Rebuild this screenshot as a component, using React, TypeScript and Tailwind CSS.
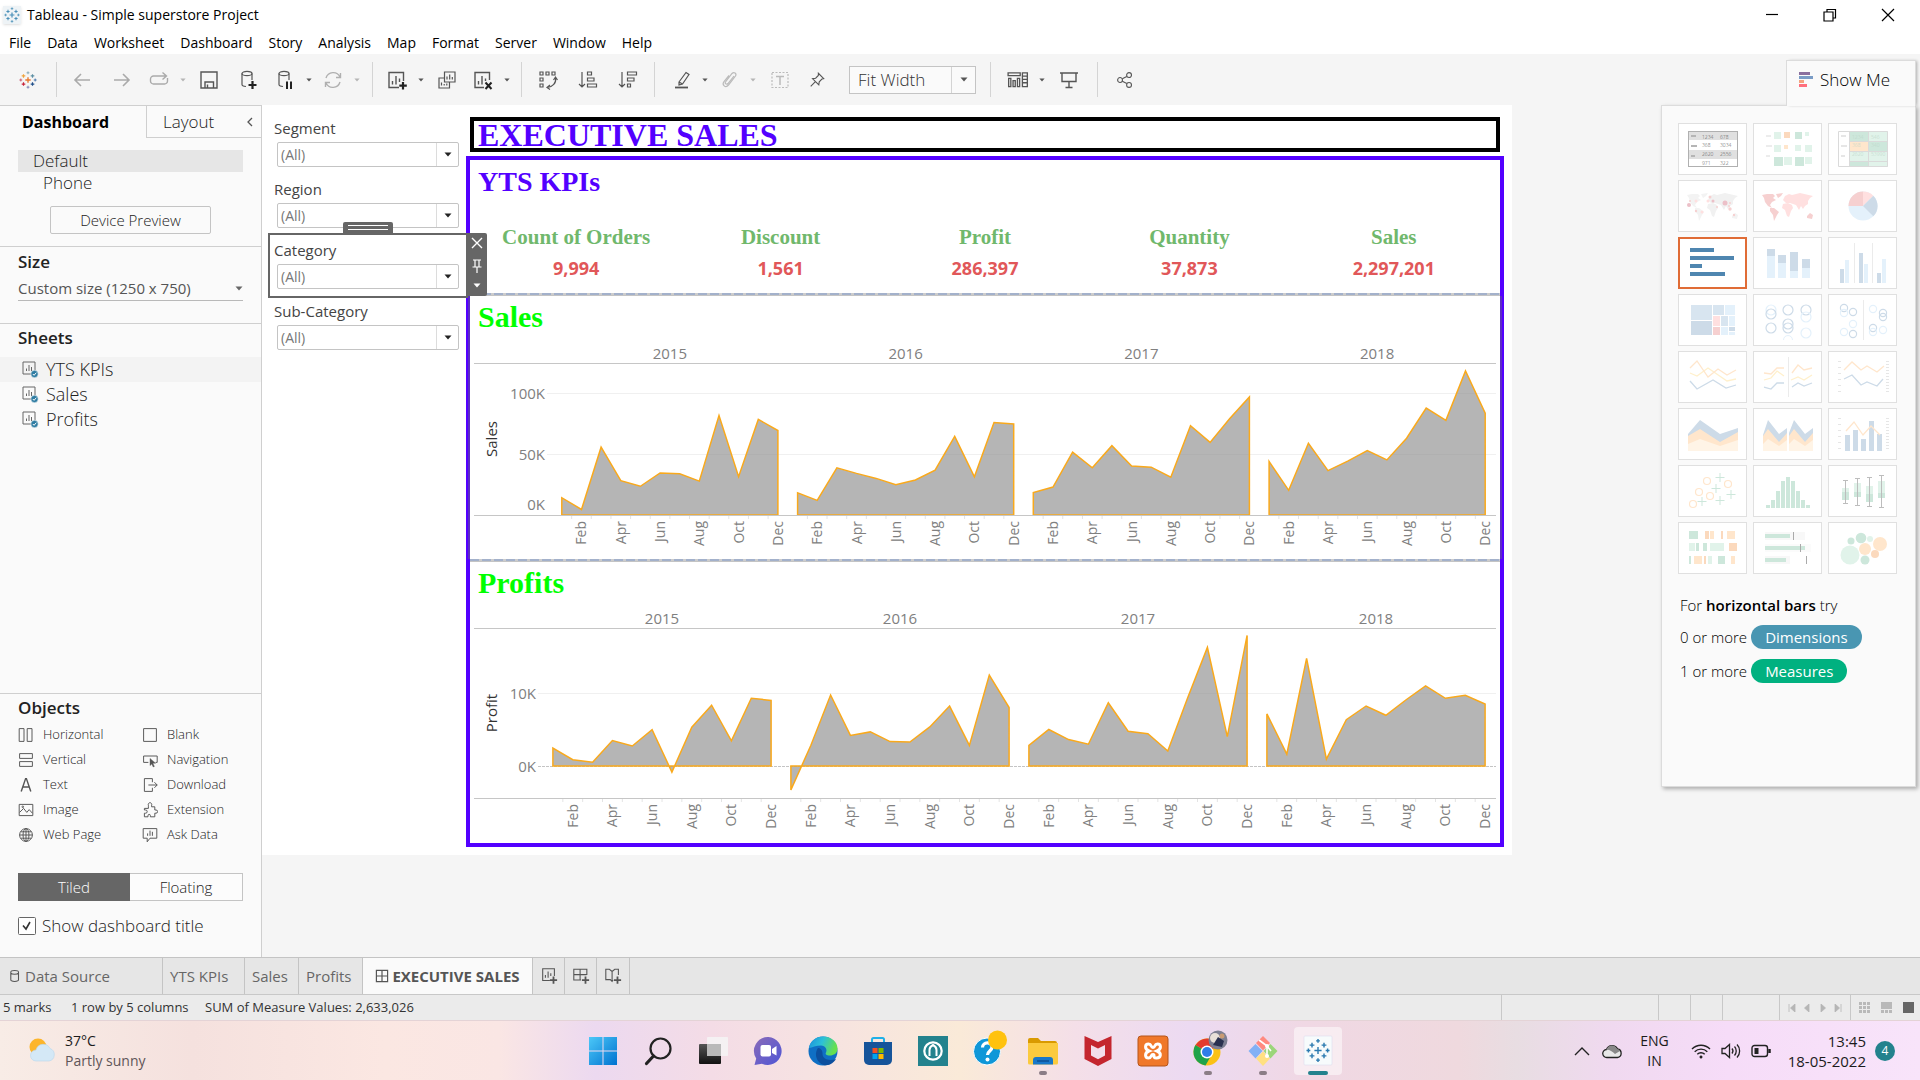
import React from "react";

type Kids = { children?: React.ReactNode };

/* ---------- data ---------- */

const menus = ["File", "Data", "Worksheet", "Dashboard", "Story", "Analysis", "Map", "Format", "Server", "Window", "Help"];

const years = ["2015", "2016", "2017", "2018"];
const months = ["Jan", "Feb", "Mar", "Apr", "May", "Jun", "Jul", "Aug", "Sep", "Oct", "Nov", "Dec"];

const sales = [
  [14.2, 4.5, 55.7, 28.3, 23.6, 34.6, 33.9, 27.9, 81.8, 31.5, 78.6, 69.5],
  [18.2, 12.0, 38.7, 34.2, 30.1, 24.8, 28.8, 36.9, 64.6, 31.4, 76.0, 74.9],
  [18.5, 23.0, 51.7, 38.8, 57.0, 40.3, 39.3, 31.1, 73.4, 59.7, 79.4, 97.0],
  [44.0, 20.3, 58.9, 36.5, 44.3, 53.0, 45.3, 63.1, 87.9, 77.8, 118.4, 83.8],
];

const profits = [
  [2.45, 0.86, 0.5, 3.49, 2.74, 4.98, -0.84, 5.32, 8.33, 3.45, 9.29, 8.98],
  [-3.28, 2.81, 9.73, 4.19, 4.67, 3.34, 3.29, 5.36, 8.21, 2.82, 12.47, 8.02],
  [2.82, 5.0, 3.61, 2.98, 8.66, 4.75, 4.43, 2.06, 9.33, 16.24, 4.01, 17.89],
  [7.14, 1.61, 14.75, 0.93, 6.34, 8.22, 6.95, 9.04, 10.99, 9.28, 9.69, 8.48],
];

const kpis = [
  ["Count of Orders", "9,994"],
  ["Discount", "1,561"],
  ["Profit", "286,397"],
  ["Quantity", "37,873"],
  ["Sales", "2,297,201"],
];

/* ---------- small helpers ---------- */

function Arrow({ className = "text-[#444]" }: { className?: string }) {
  return (
    <svg width="8" height="5" viewBox="0 0 8 5" className={className} aria-hidden="true">
      <path d="M0.5 0.5h7L4 4.5z" fill="currentColor" />
    </svg>
  );
}

function Ico({ s = 20, children, className = "text-[#555]" }: Kids & { s?: number; className?: string }) {
  return (
    <svg width={s} height={s} viewBox="0 0 20 20" fill="none" stroke="currentColor" strokeWidth="1.2" className={className} aria-hidden="true">
      {children}
    </svg>
  );
}

function Cross({ x, y, r, c, w = 1.3 }: { x: number; y: number; r: number; c: string; w?: number }) {
  return <path d={`M${x - r} ${y}h${2 * r}M${x} ${y - r}v${2 * r}`} stroke={c} strokeWidth={w} fill="none" />;
}

function TableauMark({ size, mono }: { size: number; mono?: string }) {
  const c = (k: string) => mono ?? k;
  return (
    <svg width={size} height={size} viewBox="0 0 20 20" aria-hidden="true">
      <Cross x={10} y={10} r={3} c={c("#e8762c")} w={1.5} />
      <Cross x={5} y={5.5} r={2} c={c("#f0a33c")} />
      <Cross x={15} y={5.5} r={2} c={c("#5c8fa3")} />
      <Cross x={5} y={14.5} r={2} c={c("#c8243c")} />
      <Cross x={15} y={14.5} r={2} c={c("#1f4e89")} />
      <Cross x={10} y={2} r={1.6} c={c("#7fa6b5")} w={1} />
      <Cross x={10} y={18} r={1.6} c={c("#7a7fb0")} w={1} />
      <Cross x={2} y={10} r={1.6} c={c("#c9556b")} w={1} />
      <Cross x={18} y={10} r={1.6} c={c("#3f6fa8")} w={1} />
    </svg>
  );
}

/* ---------- toolbar ---------- */

function Tool({ label, w = "w-[38px]", children }: Kids & { label: string; w?: string }) {
  return (
    <button aria-label={label} className={`flex h-9 shrink-0 items-center justify-center ${w}`}>
      {children}
    </button>
  );
}

const Drop = ({ dim }: { dim?: boolean }) => (
  <Tool label="More" w="w-[14px]">
    <Arrow className={dim ? "h-1 w-1.5 text-[#b5b5b5]" : "h-1 w-1.5 text-[#555]"} />
  </Tool>
);

const Sep = () => <div className="h-[35px] w-px shrink-0 bg-[#d4d4d4]" />;

function Toolbar() {
  return (
    <div className="flex h-[51px] items-center bg-[#f5f5f5]">
      <Tool label="Start page" w="w-[56px]"><TableauMark size={18} /></Tool>
      <Sep />
      <div className="flex items-center pr-2 pl-[5px]">
        <Tool label="Undo" w="w-10"><Ico className="text-[#aaa]"><path d="M18 10H3M9 4l-6 6 6 6" strokeWidth="1.6" /></Ico></Tool>
        <Tool label="Redo" w="w-10"><Ico className="text-[#aaa]"><path d="M2 10h15M11 4l6 6-6 6" strokeWidth="1.6" /></Ico></Tool>
        <Tool label="Replay" w="w-[34px]"><Ico className="text-[#aaa]"><path d="M8 14H4.500a3 3 0 0 1-3-3V9a3 3 0 0 1 3-3H17M13.500 2.500L17.500 6l-4 3.500M18.500 8v3a3 3 0 0 1-3 3H8" strokeWidth="1.4" /></Ico></Tool>
        <Drop dim />
        <Tool label="Save"><Ico><path d="M2 2h16v16H2zM6 18v-6h8.500v6M8.500 14.500V18" strokeWidth="1.4" /></Ico></Tool>
        <Tool label="New data source" w="w-10"><Ico><ellipse cx="9" cy="3.500" rx="5" ry="2.200" /><path d="M4 3.500v11c0 1 1.500 1.800 4 2M14 3.500V10" /><path d="M14.500 11v8M10.500 15h8" strokeWidth="2.200" stroke="#222" /></Ico></Tool>
        <Tool label="Pause updates" w="w-[34px]"><Ico><ellipse cx="9" cy="3.500" rx="5" ry="2.200" /><path d="M4 3.500v11c0 1 1.500 1.800 4 2M14 3.500V10" /><path d="M12 11.500v7.500M16 11.500v7.500" strokeWidth="2" stroke="#222" /></Ico></Tool>
        <Drop />
        <Tool label="Refresh" w="w-[34px]"><Ico className="text-[#b0b0b0]"><path d="M3 8a7.500 7.500 0 0 1 14-1M17 12a7.500 7.500 0 0 1-14 1M17.500 3v4.500H13M2.500 17v-4.500H7" strokeWidth="1.400" /></Ico></Tool>
        <Drop dim />
      </div>
      <Sep />
      <div className="flex items-center px-[7px]">
        <Tool label="New worksheet" w="w-[34px]"><Ico><path d="M12 17.500H2v-15h14.500V11M5.500 14.500V11M9 14.500V6M12.500 12V8.500" strokeWidth="1.400" /><path d="M16 12v7.500M12.300 15.700h7.500" strokeWidth="2.200" stroke="#222" /></Ico></Tool>
        <Drop />
        <Tool label="Duplicate"><Ico><path d="M7.500 2h10.500v10H7.500zM10 9.500v-3M12.700 9.500V4.500M15.300 9.500V7M7.500 8H2v10h10.500v-6M4.500 15.500v-3M7.200 15.500v-1.500M9.800 15.500v-2" /></Ico></Tool>
        <Tool label="Clear sheet" w="w-[34px]"><Ico><path d="M11 17.500H2v-15h14.500V10M5.500 14.500V11M9 14.500V6M12.500 11V8.500" strokeWidth="1.400" /><path d="M12.500 12.500l6 6.500M18.500 12.500l-6 6.500" strokeWidth="2" stroke="#222" /></Ico></Tool>
        <Drop />
      </div>
      <Sep />
      <div className="flex items-center px-[6px]">
        <Tool label="Swap rows and columns" w="w-10"><Ico><path d="M2 2h3v3H2zM8 2h3v3H8zM14 2h3v3h-3zM2 8h3v3H2zM2 14h3v3H2zM17.500 8c1 5-3 9-8 9.500M15.500 10l2-3 2 3M12 15l-3 2.500 3 2" /></Ico></Tool>
        <Tool label="Sort ascending" w="w-10"><Ico><path d="M4 2v15M1 14l3 3 3-3M9.500 2h4v3h-4zM9.500 8h6.500v3H9.500zM9.500 14h9v3h-9z" /></Ico></Tool>
        <Tool label="Sort descending" w="w-10"><Ico><path d="M4 2v15M1 14l3 3 3-3M9.500 2h9v3h-9zM9.500 8h6.500v3H9.500zM9.500 14h3v3h-3z" /></Ico></Tool>
      </div>
      <Sep />
      <div className="flex items-center pr-[14px] pl-[9px]">
        <Tool label="Highlight" w="w-[34px]"><Ico><path d="M8 12L15 2.500l3 2L11.500 14 8 15zM8 12l3.500 2" /><path d="M4 17.500h13" strokeWidth="1.800" /></Ico></Tool>
        <Drop />
        <Tool label="Group" w="w-[34px]"><Ico className="text-[#bbb]"><path d="M15 6l-6 7.500c-1.500 1.500-3.500 0-2.500-1.500L13 3.500c2-2.200 5 0 3.500 2.500L9.500 15c-3 3.500-7 0-4.500-3.500L10 5.500" /></Ico></Tool>
        <Drop dim />
        <Tool label="Show mark labels"><Ico className="text-[#bbb]"><path d="M3 2.500h16v15H3z" strokeDasharray="2 1.500" /><path d="M7 6.500h8M11 6.500V15" strokeWidth="1.500" /></Ico></Tool>
        <Tool label="Fix axes"><Ico s={18}><path d="M11.500 2.500l6 6-2 .5-3 3-.5 3.500-7-7L8.500 8l3-3zM8.500 11.500L3 17" /></Ico></Tool>
        <div className="ml-[13px] flex h-7 w-[127px] items-center border border-[#c4c4c4] bg-[#fafafa] pr-[7px]">
          <select aria-label="Fit" className="h-full w-full min-w-0 appearance-none bg-transparent pl-2 text-[17px] leading-6 text-[#333]">
            <option>Fit Width</option>
          </select>
          <div className="mr-2 h-[26px] w-px shrink-0 bg-[#d4d4d4]" />
          <Arrow className="shrink-0 text-[#555]" />
        </div>
      </div>
      <Sep />
      <div className="flex items-center pr-2 pl-[10px]">
        <Tool label="Show/hide cards" w="w-[34px]"><Ico s={22}><path d="M1 3.500h11v2.500H1zM1.500 8.500h2v7.500h-2zM5.500 10.500h2v5.500h-2zM9.500 8.500h2v7.500h-2zM14 3.500h4.500v12.500H14zM14 6.500h4.500M14 9.500h4.500M14 12.500h4.500" /></Ico></Tool>
        <Drop />
        <Tool label="Presentation mode" w="w-10"><Ico><path d="M1 3h18M3 3v8.500h14V3M10 11.500V17M6.500 17.500h7" strokeWidth="1.400" /></Ico></Tool>
      </div>
      <Sep />
      <div className="flex items-center px-2">
        <Tool label="Share"><Ico s={18}><circle cx="4.500" cy="10" r="2.700" /><circle cx="14.500" cy="4.500" r="2.700" /><circle cx="14.500" cy="15.500" r="2.700" /><path d="M7 8.700L12 6M7 11.300L12 14" /></Ico></Tool>
      </div>
    </div>
  );
}

/* ---------- left panel ---------- */

function SheetIcon() {
  return (
    <svg width="17" height="17" viewBox="0 0 17 17" fill="none" aria-hidden="true">
      <path d="M1 1h12v12H1z" stroke="#666" />
      <path d="M4.500 10V7.500M7 10V4M9.500 10V6" stroke="#666" />
      <circle cx="12.500" cy="13" r="3.700" fill="#2f7da3" stroke="#fafafa" strokeWidth=".6" />
      <path d="M10.800 13l1.300 1.300 2.200-2.600" stroke="#fff" />
    </svg>
  );
}

const objectItems: [string, React.ReactNode][] = [
  ["Horizontal", <path d="M1.500 2h6v16h-6zM11.500 2h6v16h-6z" />],
  ["Blank", <path d="M2 2h16v16H2z" />],
  ["Vertical", <path d="M2 2h16v6H2zM2 12h16v6H2z" />],
  ["Navigation", <><path d="M8 13H2V5h17v8h-2" /><path d="M10 8l7 6-3.500.2L15.500 18l-1.500.7-1.700-3.800L10 17z" fill="currentColor" strokeWidth=".5" /></>],
  ["Text", <path d="M4 18L9.500 2h1L16 18M6 12.500h8" strokeWidth="1.800" />],
  ["Download", <path d="M13 6.500V2H3v16h10v-4.500M8 10h11M15.500 6.500L19 10l-3.500 3.500" />],
  ["Image", <><path d="M1.500 3h17v14h-17zM2 13l5-5 4 5 3-3.500 4 4.500" /><circle cx="6" cy="6" r="1" /></>],
  ["Extension", <path d="M8 6V4a2.200 2.200 0 1 1 4 0v2h4v4h1.500a2 2 0 1 1 0 4H16v4.500h-5.500V17a1.500 1.500 0 0 0-3 0v1.500H3V14h1.500a2 2 0 1 0 0-4H3V8h5z" />],
  ["Web Page", <><circle cx="10" cy="10" r="8" /><ellipse cx="10" cy="10" rx="3.700" ry="8" /><path d="M2 10h16M3.500 6h13M3.500 14h13M10 2v16" /></>],
  ["Ask Data", <path d="M1.500 2h17v12H10l-3.500 4.500V14h-5zM7 11V8M10 11V4.500M13 11V6" />],
];

function LeftPanel() {
  return (
    <aside className="flex w-[262px] shrink-0 flex-col border-t border-r border-[#cfcfcf] bg-[#fafafa] text-[#222]">
      <div className="flex h-8">
        <button className="w-[146px] pr-4 pl-[22px] text-left text-[16px] leading-7 font-bold text-black">Dashboard</button>
        <button className="flex-1 border-b border-l border-[#cfcfcf] pl-4 text-left text-[17px]">Layout</button>
        <button aria-label="Collapse" className="flex w-[15px] items-center border-b border-[#cfcfcf]">
          <svg width="8" height="12" viewBox="0 0 8 12" fill="none" stroke="#555" strokeWidth="1.300"><path d="M6 2L2 6l4 4" /></svg>
        </button>
      </div>

      <div className="px-[18px] pt-3">
        <button className="block h-[22px] w-full bg-[#e6e6e6] pl-[15px] text-left text-[17px] leading-[22px]">Default</button>
        <button className="block h-[22px] w-full pl-[25px] text-left text-[17px] leading-[22px]">Phone</button>
        <div className="pt-3 pr-[32px] pl-8">
          <button className="h-7 w-full rounded-[2px] border border-[#c4c4c4] text-[15px] leading-[26px]">Device Preview</button>
        </div>
      </div>

      <div className="mt-3 border-t border-[#cfcfcf] px-[18px] pt-[3px]">
        <h2 className="text-[17px] leading-6 font-semibold">Size</h2>
        <div className="mt-[2px] flex h-[25px] items-center border-b border-[#b9b9b9]">
          <select aria-label="Size" className="w-full appearance-none bg-transparent text-[15px] font-normal text-[#555]">
            <option>Custom size (1250 x 750)</option>
          </select>
          <Arrow className="shrink-0 text-[#666]" />
        </div>
      </div>

      <div className="mt-[22px] flex-1 border-t border-[#cfcfcf] pt-[2px]">
        <h2 className="px-[18px] text-[17px] leading-6 font-semibold">Sheets</h2>
        <ul className="mt-[7px] text-[18px]">
          {["YTS KPIs", "Sales", "Profits"].map((s, i) => (
            <li key={s} className={`flex h-[25px] items-center gap-[7px] pl-[22px] ${i === 0 ? "bg-[#f3f3f3]" : ""}`}>
              <SheetIcon />
              {s}
            </li>
          ))}
        </ul>
      </div>

      <div className="border-t border-[#cfcfcf] px-[18px] pt-[2px]">
        <h2 className="text-[17px] leading-6 font-semibold">Objects</h2>
        <ul className="mt-[2px] grid grid-cols-[124px_1fr] text-[13px]">
          {objectItems.map(([label, icon]) => (
            <li key={label} className="flex h-[25px] items-center gap-[9px]">
              <Ico s={16} className="text-[#555]">{icon}</Ico>
              {label}
            </li>
          ))}
        </ul>
        <div className="mt-[26px] flex h-7 text-[15px]">
          <button className="flex-1 bg-[#666] text-white">Tiled</button>
          <button className="flex-1 border border-l-0 border-[#c4c4c4] bg-[#fcfcfc]">Floating</button>
        </div>
        <label className="mt-[13px] mb-[19px] flex h-6 items-center gap-[6px] text-[17px]">
          <input type="checkbox" defaultChecked className="peer sr-only" />
          <svg width="18" height="18" viewBox="0 0 18 18" fill="none" aria-hidden="true">
            <rect x=".5" y=".5" width="17" height="17" rx="1" fill="#fff" stroke="#666" />
            <path d="M5 8.500L8 12l4-7" stroke="#333" strokeWidth="1.600" />
          </svg>
          Show dashboard title
        </label>
      </div>
    </aside>
  );
}

/* ---------- dashboard canvas ---------- */

function Filter({ label, selected }: { label: string; selected?: boolean }) {
  return (
    <div className="relative h-[61px] pt-[5px] pr-[7px] pl-[4px]">
      <label htmlFor={`f-${label}`} className="block text-[15px] leading-5 font-normal text-[#444]">{label}</label>
      <div className="mt-1 ml-[3px] flex h-[25px] items-center rounded-[2px] border border-[#c4c4c4] bg-white">
        <select id={`f-${label}`} className="h-full w-full flex-1 appearance-none bg-transparent pl-[3px] text-[14px] leading-5 font-normal text-[#777]">
          <option>(All)</option>
        </select>
        <div className="flex h-full w-[22px] items-center justify-center border-l border-[#dcdcdc]">
          <Arrow className="text-[#222]" />
        </div>
      </div>
      {selected && (
        <>
          <div className="pointer-events-none absolute -top-[2px] -right-[2px] -bottom-[2px] -left-[2px] border-2 border-[#666]" />
          <div className="absolute -top-[13px] left-[73px] flex h-[11px] w-[50px] flex-col items-center justify-center gap-[3px] rounded-t-[2px] bg-[#666]">
            <div className="h-px w-10 bg-white" />
            <div className="h-px w-10 bg-white" />
          </div>
          <div className="absolute -top-[2px] -right-[21px] z-10 flex h-[63px] w-[21px] flex-col items-center justify-between rounded-r-[2px] bg-[#666] pt-1 pb-2">
            <button aria-label="Remove"><svg width="12" height="12" viewBox="0 0 12 12" stroke="#fff" strokeWidth="1.400"><path d="M1 1l10 10M11 1L1 11" /></svg></button>
            <button aria-label="Pin"><svg width="10" height="14" viewBox="0 0 10 14" fill="none" stroke="#fff" strokeWidth="1.200"><path d="M1 1h8M3 1v6.500M7 1v6.500M.5 8h9M5 8v6" /></svg></button>
            <button aria-label="More options"><Arrow className="text-white" /></button>
          </div>
        </>
      )}
    </div>
  );
}

interface ChartProps {
  title: string;
  data: number[][];
  height: number;
  left: number;
  zero: number;
  unit: number;
  axis: number;
  ticks: { v: number; label: string; dy?: number }[];
}

/* Area chart with one pane per year; all coordinates are relative to the header row. */
function AreaChart({ title, data, height, left, zero, unit, axis, ticks }: ChartProps) {
  const W = 1022;
  const pane = (W - 1 - left) / 4;
  const step = pane / 12;
  const mid = (24 + axis) / 2;
  return (
    <svg viewBox={`0 0 ${W} ${height}`} className="block w-full" fontSize="15" role="img" aria-label={title}>
      {years.map((y, i) => (
        <text key={y} x={left + pane * (i + 0.5)} y="20" textAnchor="middle" fill="#808080">{y}</text>
      ))}
      <path d={`M0 24.500H${W}`} stroke="#c6c6c6" />
      {ticks.map((t) => (
        <g key={t.label}>
          {(t.v !== 0 || axis !== zero) && (
            <path
              d={`M${left - 5} ${Math.round(zero - t.v * unit) + 0.5}H${W}`}
              stroke={t.v === 0 ? "#c4c4c4" : "#f0f0f0"}
              strokeDasharray={t.v === 0 ? "3 1" : undefined}
            />
          )}
          <text x={left - 7} y={zero - t.v * unit + 6 + (t.dy ?? 0)} textAnchor="end" fill="#808080">{t.label}</text>
        </g>
      ))}
      {data.map((row, i) => {
        const x = (m: number) => left + pane * i + step * (m + 0.5);
        const line = row.map((v, m) => `${x(m).toFixed(1)} ${(zero - v * unit).toFixed(1)}`).join("L");
        return (
          <path
            key={i}
            d={`M${x(0).toFixed(1)} ${zero}L${line}L${x(11).toFixed(1)} ${zero}Z`}
            fill="#8c8c8c"
            fillOpacity=".64"
            stroke="#f9a91c"
            strokeWidth="1.500"
          />
        );
      })}
      <path d={`M0 ${axis + 0.5}H${W}`} stroke="#c6c6c6" />
      {data.map((_, i) =>
        months.map((m, k) => {
          const cx = left + pane * i + step * (k + 0.5);
          return (
            <g key={`${i}${m}`}>
              {k < 11 && <path d={`M${cx + step / 2} ${axis + 1}v3`} stroke="#e4e4e4" />}
              {k % 2 === 1 && (
                <text transform={`translate(${cx + 5} ${axis + 6}) rotate(-90)`} textAnchor="end" fontSize="14" fill="#808080">{m}</text>
              )}
            </g>
          );
        })
      )}
      <text transform={`translate(23 ${mid}) rotate(-90)`} textAnchor="middle" fill="#333">{title}</text>
    </svg>
  );
}

const Divider = () => (
  <div className="h-[3px] border-b border-[#c4c4c4] bg-[repeating-linear-gradient(90deg,#a3b1cb_0_9px,#cccccc_9px_12px)]" />
);

function Dashboard() {
  return (
    <div className="flex h-[750px] w-[1250px] shrink-0 bg-white">
      <div className="w-[204px] shrink-0 pt-2 pl-2">
        <Filter label="Segment" />
        <Filter label="Region" />
        <Filter label="Category" selected />
        <Filter label="Sub-Category" />
      </div>
      <div className="flex min-w-0 flex-1 flex-col pt-3 pr-2 pb-2 font-['Liberation_Serif',serif]">
        <div className="mr-1 ml-1 flex h-[35px] items-center border-4 border-black pl-1">
          <h1 className="text-[32px] leading-[28px] font-bold text-[#5300ff]">EXECUTIVE SALES</h1>
        </div>
        <div className="mt-1 flex flex-1 flex-col border-4 border-[#5300ff]">
          <section className="h-[133px] px-1 pt-1">
            <h2 className="pl-1 text-[28px] leading-9 font-bold text-[#5300ff]">YTS KPIs</h2>
            <dl className="mt-[25px] grid grid-cols-5 text-center">
              {kpis.map(([k, v]) => (
                <div key={k}>
                  <dt className="text-[21px] leading-6 font-bold text-[#70b86c]">{k}</dt>
                  <dd className="mt-[6px] font-['Open_Sans',sans-serif] text-[18px] leading-[26px] font-bold text-[#e15759]">{v}</dd>
                </div>
              ))}
            </dl>
          </section>
          <Divider />
          <section className="-mx-[2px] h-[263px] border-x-2 border-[#5b2cc4] px-1 pt-[3px]">
            <h2 className="pl-1 text-[30px] leading-9 font-bold text-[#00ff00]">Sales</h2>
            <div className="mt-1 font-['Open_Sans',sans-serif] font-normal">
              <AreaChart
                title="Sales"
                data={sales}
                height={210}
                left={78}
                zero={176}
                unit={1.2165}
                axis={176}
                ticks={[{ v: 100, label: "100K" }, { v: 50, label: "50K" }, { v: 0, label: "0K", dy: -11 }]}
              />
            </div>
          </section>
          <Divider />
          <section className="flex-1 px-1 pt-[3px]">
            <h2 className="pl-1 text-[30px] leading-9 font-bold text-[#00ff00]">Profits</h2>
            <div className="mt-[3px] font-['Open_Sans',sans-serif] font-normal">
              <AreaChart
                title="Profit"
                data={profits}
                height={235}
                left={69}
                zero={162}
                unit={7.3}
                axis={194}
                ticks={[{ v: 10, label: "10K" }, { v: 0, label: "0K" }]}
              />
            </div>
          </section>
        </div>
      </div>
    </div>
  );
}

/* ---------- Show Me ---------- */

const B1 = "#cddbe8", B2 = "#e4f1fb", G1 = "#cde7db", G2 = "#e1f3ea", O1 = "#ffe6cc", O2 = "#fbd9bd", R1 = "#f6d0d0", R2 = "#ffe0e0", Y1 = "#fff0cc";

type Box = [number, number, number, number, string];
const Boxes = ({ b }: { b: Box[] }) => (
  <>{b.map(([x, y, x2, y2, c], i) => <rect key={i} x={x} y={y} width={x2 - x} height={y2 - y} fill={c} />)}</>
);
const Lines = ({ l, w = 1.3 }: { l: [string, string][]; w?: number }) => (
  <>{l.map(([p, c], i) => <polyline key={i} points={p} fill="none" stroke={c} strokeWidth={w} />)}</>
);
const Polys = ({ p }: { p: [string, string][] }) => <>{p.map(([d, c], i) => <polygon key={i} points={d} fill={c} />)}</>;
const Dots = ({ d, fill }: { d: [number, number, number, string][]; fill?: boolean }) => (
  <>{d.map(([x, y, r, c], i) => <circle key={i} cx={x} cy={y} r={r} fill={fill ? c : "none"} stroke={fill ? "none" : c} strokeWidth="1.200" />)}</>
);
const Ticks = () => <path d="M10 10.500h3M10 16.500h3M10 22.500h3M10 28.500h3M10 34.500h3M10 40.500h3M58 10.500h3M58 13.500h3M58 16.500h3M58 19.500h3M58 22.500h3M58 25.500h3M58 28.500h3M58 31.500h3M58 34.500h3M58 37.500h3M58 40.500h3" stroke="#e6e6e6" />;
const Nums = ({ rows, x, c }: { rows: [string, string][]; x: [number, number]; c: string }) => (
  <>
    {rows.map(([a, b], i) => (
      <g key={i} fontSize="5" fill={c}>
        <text x={x[0]} y={15.500 + i * 8.800}>{a}</text>
        <text x={x[1]} y={15.500 + i * 8.800}>{b}</text>
      </g>
    ))}
  </>
);
const World = ({ a, b }: { a: string; b: string }) => (
  <>
    <path fill={a} d="M9 15l5-1 6 0 2 2-2 2 3 2-4 2-2 3 2 3-4-2-3-4-1-4zM23 14l7-1-2 3-3 2zM17 28l4 0 5 4-2 3-3 6-1-6-3-4zM54 36l3-3 3 2-1 4-5-1z" />
    <path fill={b} d="M30 20l2-4 4-2 3 1 8-2 13 3-3 2-2 3 0 3-3 2-2 3-2-3-2 4-3-5-3-1-3-1-4 0zM30 24l5-1 4 2 1 3-2 3-2 6-2-1-2-6-3-2z" />
  </>
);

const thumbs: [string, React.ReactNode][] = [
  ["Text table", <><Boxes b={[[10, 8, 60, 17, "#e0e0e0"], [10, 27, 60, 36, "#e0e0e0"], [13, 12, 18, 14, "#b5b5b5"], [13, 22, 19, 24, "#b5b5b5"], [13, 32, 17, 34, "#b5b5b5"]]} /><rect x="10.500" y="8.500" width="49" height="35" fill="none" stroke="#b0b0b0" /><Nums rows={[["1234", "678"], ["368", "3034"], ["2620", "2556"], ["971", "322"]]} x={[24, 42]} c="#555" /></>],
  ["Heat map", <Boxes b={[[13, 12, 18, 14, "#ececec"], [13, 22, 19, 24, "#ececec"], [13, 32, 17, 34, "#ececec"], [21, 9, 28, 16, G2], [31, 9, 37, 15, O2], [42, 9, 49, 16, G1], [52, 9, 56, 13, G2], [21, 22, 28, 29, G2], [31, 22, 35, 26, O1], [42, 22, 48, 28, G2], [52, 22, 59, 29, G2], [21, 34, 30, 43, G1], [31, 34, 39, 42, G2], [42, 34, 51, 43, G1], [52, 34, 59, 41, G2]]} />],
  ["Highlight table", <><Boxes b={[[13, 12, 18, 14, "#e6e6e6"], [13, 22, 19, 24, "#e6e6e6"], [13, 32, 17, 34, "#e6e6e6"], [21, 8, 40, 18, G1], [40, 8, 60, 18, G2], [21, 18, 40, 28, O1], [40, 18, 60, 28, G1], [21, 28, 60, 38, G2], [21, 38, 40, 44, G1], [40, 38, 60, 44, G2]]} /><path d="M10.500 8.500h49v35h-49zM21.500 8v36M40.500 8v36M21 18.500h39M21 28.500h39M21 38.500h39" fill="none" stroke="#dadada" /><Nums rows={[["1234", "546"], ["368", "340"], ["2620", "53990"]]} x={[24, 43]} c="#bcd6c9" /></>],
  ["Symbol map", <><World a="#f3f3f3" b="#f1f1f1" /><Dots fill d={[[11, 25, 2, "#ecc0c8"], [12, 21, 1, R1], [18, 21, 1.500, R2], [30, 21, 1.500, R2], [32, 17, 1.500, R1], [35, 21, 1.500, "#ecc0c8"], [47, 23, 2.500, "#ecc0c8"], [52, 23, 1, R1], [39, 27, 1, R1], [52, 29, 1.700, R1], [51, 26, 1, R1], [18, 31, 1.200, R1], [24, 32, 1.500, R2], [56, 35, 1.200, R1]]} /></>],
  ["Map", <World a={R1} b={R2} />],
  ["Pie chart", <><circle cx="35" cy="26" r="14.500" fill={B2} /><path d="M35 26L20.500 26A14.500 14.500 0 0 1 35 11.500z" fill={R1} /><path d="M35 26V11.500A14.500 14.500 0 0 1 45.300 15.700z" fill={R2} /><path d="M35 26L45.300 15.700A14.500 14.500 0 0 1 45.300 36.300z" fill={B1} /></>],
  ["Horizontal bars", <Boxes b={[[12, 11, 36, 15, "#4f86b0"], [12, 19, 56, 23, "#4f86b0"], [12, 27, 24, 31, "#4f86b0"], [12, 35, 47, 39, "#4f86b0"]]} />],
  ["Stacked bars", <Boxes b={[[14, 12, 22, 19, B1], [14, 19, 22, 41, B2], [25, 18, 33, 26, B1], [25, 26, 33, 41, B2], [37, 15, 45, 34, B1], [37, 34, 45, 41, B2], [49, 22, 57, 31, B1], [49, 31, 57, 41, B2]]} />],
  ["Side-by-side bars", <><Boxes b={[[12, 32, 16, 46, B1], [17, 23, 21, 46, B2], [31, 16, 35, 46, B1], [36, 27, 40, 46, B2], [49, 36, 53, 46, B1], [54, 22, 58, 46, B2]]} /><path d="M26.500 6v40M44.500 6v40" stroke="#ebebeb" /></>],
  ["Treemap", <Boxes b={[[13, 11, 34, 26, "#d8e5f0"], [13, 27, 34, 41, B1], [35, 11, 46, 21, "#d8e5f0"], [47, 11, 57, 21, B2], [35, 22, 42, 32, R2], [43, 22, 50, 32, "#d8e5f0"], [51, 22, 57, 32, B2], [35, 33, 42, 41, R1], [43, 33, 50, 41, B2], [51, 33, 57, 37, B1], [51, 38, 57, 41, B2]]} />],
  ["Circle views", <><Dots d={[[18, 16, 5, B2], [18, 20, 5, B1], [18, 34, 5, B1], [35, 16, 5, B1], [35, 30, 5, B1], [35, 34, 5, B1], [53, 16, 5, B1], [53, 23, 5, B2], [53, 39, 5, B2]]} /><path d="M30.500 46a4.500 4.500 0 0 1 9 0" fill="none" stroke={B2} /></>],
  ["Side-by-side circles", <><Dots d={[[16, 14, 3.600, B1], [16, 19, 3.600, B2], [25, 18, 3.600, B1], [25, 30, 3.600, B2], [16, 38, 3.600, B2], [25, 40, 3.600, B1], [45, 15, 3.600, B2], [55, 19, 3.600, B1], [55, 23, 3.600, B1], [45, 34, 3.600, B1], [45, 38, 3.600, B2], [55, 36, 3.600, B2]]} /><path d="M35.500 6v40" stroke="#ebebeb" /></>],
  ["Lines (continuous)", <Lines l={[["12,22 19,25 30,17 49,30 58,28", Y1], ["12,17 19,10 30,26 40,18 49,24 58,19", O1], ["12,30 19,38 35,29 48,37 58,34", B1]]} />],
  ["Lines (discrete)", <><Lines l={[["11,29 18,27 24,20 31,25", Y1], ["38,29 45,26 51,29 59,24", Y1], ["11,22 18,23 24,17 31,17", O1], ["39,22 45,14 51,19 59,17", O1], ["11,36 18,38 24,32 31,32", B1], ["39,36 45,32 51,35 59,32", B1]]} /><path d="M35.500 6v40" stroke="#ebebeb" /></>],
  ["Dual lines", <><Lines l={[["16,19 24,11 33,19 39,15 49,21 56,15", O1], ["16,28 24,24 33,34 39,31 49,35 55,28", B1]]} /><Ticks /></>],
  ["Area (continuous)", <Polys p={[["10,26 22,12 42,26 60,20 60,43 10,43", B1], ["10,28 22,21 42,34 60,24 60,43 10,43", O1], ["10,36 22,31 42,38 60,32 60,43 10,43", "#fff4e6"]]} />],
  ["Area (discrete)", <Polys p={[["10,27 15,12 26,26 34,20 34,43 10,43", B1], ["10,28 15,21 26,34 34,25 34,43 10,43", O1], ["10,36 15,31 26,38 34,32 34,43 10,43", "#fff4e6"], ["36,25 41,12 52,26 60,20 60,43 36,43", B1], ["36,28 41,21 52,34 60,25 60,43 36,43", O1], ["36,36 41,31 52,38 60,32 60,43 36,43", "#fff4e6"]]} />],
  ["Dual combination", <><Boxes b={[[17, 27, 22, 43, B1], [25, 22, 30, 43, B1], [33, 31, 38, 43, B1], [41, 13, 46, 43, B1], [49, 26, 54, 43, B1]]} /><Lines l={[["18,23 26,14 35,27 43,18 52,27", O1]]} /><Ticks /></>],
  ["Scatter plot", <><Dots d={[[29, 16, 3.500, O1], [50, 19, 3.500, O1], [21, 27, 3.500, O1], [32, 31, 3.500, O1], [15, 39, 3.500, O1]]} /><path d="M37.500 12.500h9M42 8v9M33.500 23.500h9M38 19v9M48.500 29.500h9M53 25v9M19.500 36.500h9M24 32v9M37.500 35.500h9M42 31v9" stroke={G1} /></>],
  ["Histogram", <Boxes b={[40, 35, 26, 16, 12, 16, 26, 35, 40].map((y, i) => [13 + i * 5, y, 17 + i * 5, 43, G1] as Box)} />],
  ["Box-and-whisker", <><Boxes b={[[14, 23, 21, 27, G2], [14, 27, 21, 35, G1], [26, 18, 33, 27, G2], [26, 27, 33, 32, G1], [38, 21, 45, 29, G2], [38, 29, 45, 37, G1], [50, 16, 57, 28, G2], [50, 28, 57, 33, G1]]} /><path d="M17.500 15v23M15 15.500h5M15 38.500h5M29.500 13v27M27 13.500h5M27 40.500h5M41.500 12v29M39 12.500h5M39 41.500h5M53.500 10v32M51 10.500h5M51 42.500h5" stroke="#bdbdbd" /></>],
  ["Gantt", <Boxes b={[[11, 9, 20, 17, G1], [27, 9, 31, 17, O2], [32, 9, 36, 17, O1], [43, 9, 45, 17, O2], [49, 9, 57, 17, O1], [11, 21, 17, 29, G2], [18, 21, 21, 29, G1], [25, 21, 29, 29, G1], [32, 21, 46, 29, G2], [51, 21, 59, 29, O2], [11, 34, 13, 42, G1], [16, 34, 24, 42, O1], [26, 34, 28, 42, O2], [30, 34, 34, 42, G2], [40, 34, 47, 42, G1], [53, 34, 57, 42, O1]]} />],
  ["Bullet graph", <Boxes b={[[12, 10, 52, 18, "#f8f8f8"], [12, 12, 37, 16, G1], [40, 10, 41, 18, "#aaa"], [12, 22, 58, 30, "#fbfbfb"], [12, 24, 52, 28, G1], [47, 22, 48, 30, "#aaa"], [12, 34, 37, 42, "#f8f8f8"], [12, 36, 33, 40, G1], [53, 34, 54, 42, "#aaa"]]} />],
  ["Packed bubbles", <Dots fill d={[[23, 19, 3.500, G1], [33, 16, 5.300, G1], [42, 17, 3, G2], [52, 22, 7, O1], [37, 27, 6, O1], [22, 33, 9.500, G2], [47, 32, 4, O2], [37, 38, 4.500, G1]]} />],
];

function ShowMe() {
  return (
    <aside className="flex w-[259px] shrink-0 flex-col bg-[#f5f5f5] pt-[6px] pr-1">
      <div className="relative z-10 -mb-px flex h-[46px] w-[130px] items-center gap-[6px] self-end border border-b-0 border-[#dcdcdc] bg-[#fafafa] pb-2 pl-3 text-[17px] text-black shadow-[2px_0_3px_-1px_rgba(0,0,0,0.3)]">
        <svg width="15" height="15" viewBox="0 0 15 15" aria-hidden="true">
          <path d="M0 0h11v3H0z" fill="#8a6f9e" /><path d="M0 4h14v3H0z" fill="#7a9cc6" /><path d="M0 8h5v3H0z" fill="#f4a27e" /><path d="M0 12h8v3H0z" fill="#ff6f7d" />
        </svg>
        Show Me
      </div>
      <div className="h-[682px] border border-[#dcdcdc] bg-[#fafafa] px-4 pt-[17px] shadow-[2px_2px_4px_rgba(0,0,0,0.3)]">
        <div className="grid grid-cols-3 gap-x-[6px] gap-y-[5px] pr-[2px]">
          {thumbs.map(([name, art]) => (
            <button
              key={name}
              aria-label={name}
              className={`flex h-[52px] items-center justify-center overflow-hidden bg-white ${name === "Horizontal bars" ? "border-2 border-[#e06c36]" : "border border-[#e0e0e0]"}`}
            >
              <svg width="69" height="52" viewBox="0 0 69 52" className="shrink-0">{art}</svg>
            </button>
          ))}
        </div>
        <div className="pt-[19px] pl-[2px] text-[15px] leading-6 text-black">
          <p>For <b className="font-semibold">horizontal bars</b> try</p>
          <p className="mt-2 flex items-center gap-1">0 or more <span className="rounded-full bg-[#4996b2] px-[14px] font-normal text-white">Dimensions</span></p>
          <p className="mt-[10px] flex items-center gap-1">1 or more <span className="rounded-full bg-[#00b180] px-[14px] font-normal text-white">Measures</span></p>
        </div>
      </div>
    </aside>
  );
}

/* ---------- bottom bars ---------- */

function SheetTabs() {
  const tab = "flex h-full items-center border-r border-[#c4c4c4]";
  return (
    <nav className="flex h-[37px] items-center border-t border-[#c4c4c4] bg-[#e6e6e6] text-[15px] font-normal text-[#666]">
      <button className={`${tab} w-[163px] gap-[3px] pl-2`}>
        <Ico s={14}><path d="M4 4.500c0-3 11-3 11 0v11c0 3-11 3-11 0zM4 6c2 2 9 2 11 0" strokeWidth="1.500" /></Ico>Data Source
      </button>
      <button className={`${tab} w-[82px] pl-[7px]`}>YTS KPIs</button>
      <button className={`${tab} w-[54px] pl-[7px]`}>Sales</button>
      <button className={`${tab} w-[64px] pl-[7px]`}>Profits</button>
      <button className={`${tab} w-[170px] justify-center gap-[3px] bg-[#fafafa] text-[15px] font-bold whitespace-nowrap text-[#555]`}>
        <Ico s={14}><path d="M2 2h16v16H2zM10 2v16M2 10h16" strokeWidth="1.700" /></Ico>EXECUTIVE SALES
      </button>
      <button aria-label="New worksheet" className={`${tab} w-8 justify-center`}><Ico s={18}><path d="M11 15H3V2h13v8M6 12V9M9 12V5M12 10V7" /><path d="M15 10.500v8M11 14.500h8" strokeWidth="2" /></Ico></button>
      <button aria-label="New dashboard" className={`${tab} w-8 justify-center`}><Ico s={18}><path d="M10 14.500H2v-12h14.500V9M9 2.500v12M2 8.500h14" /><path d="M15 10.500v8M11 14.500h8" strokeWidth="2" /></Ico></button>
      <button aria-label="New story" className={`${tab} w-[33px] justify-center`}><Ico s={18}><path d="M10 14.500L9 16l-2-2H2V2.500h4L9 5l3-2.500h4V9M9 5v11" /><path d="M15 10.500v8M11 14.500h8" strokeWidth="2" /></Ico></button>
    </nav>
  );
}

function StatusBar() {
  const cell = "flex h-full items-center border-l border-[#c8c8c8]";
  return (
    <footer className="flex h-[26px] items-center border-t border-[#c8c8c8] bg-[#ebebeb] text-[13px] font-normal text-[#333]">
      <span className="w-[68px] pl-[3px]">5 marks</span>
      <span className="w-[134px] pl-[3px]">1 row by 5 columns</span>
      <span className="pl-[3px]">SUM of Measure Values: 2,633,026</span>
      <div className="ml-auto flex h-full">
        <div className={`${cell} w-[157px]`} />
        <div className={`${cell} w-8`} />
        <div className={`${cell} w-8`} />
        <div className={`${cell} w-[57px]`} />
        <div className={`${cell} w-[71px] justify-around px-1 text-[#b5b5b5]`}>
          {["M1 0v8M7 0v8L2.500 4z", "M6 0v8L1.500 4z", "M2 0v8l4.500-4z", "M7 0v8M1 0v8l4.500-4z"].map((d, i) => (
            <button key={d} aria-label={["First", "Previous", "Next", "Last"][i]}>
              <svg width="8" height="8" viewBox="0 0 8 8" fill="currentColor" stroke="currentColor" strokeWidth=".8"><path d={d} /></svg>
            </button>
          ))}
        </div>
        <div className={`${cell} w-[70px] justify-between pr-[6px] pl-2 text-[#b9b9b9]`}>
          <button aria-label="Tabs view"><svg width="11" height="11" viewBox="0 0 11 11" fill="currentColor"><path d="M0 0h3v3H0zM4 0h3v3H4zM8 0h3v3H8zM0 4h3v3H0zM4 4h3v3H4zM8 4h3v3H8zM0 8h3v3H0zM4 8h3v3H4zM8 8h3v3H8z" /></svg></button>
          <button aria-label="Filmstrip view"><svg width="11" height="11" viewBox="0 0 11 11" fill="currentColor"><path d="M0 0h11v7H0zM0 8h3v3H0zM4 8h3v3H4zM8 8h3v3H8z" /></svg></button>
          <button aria-label="Sheet view" className="size-[11px] bg-[#666]" />
        </div>
      </div>
    </footer>
  );
}

const apps: [string, React.ReactNode, ("dot" | "active")?][] = [
  ["Start", <><defs><linearGradient id="win" x1="0" y1="0" x2="1" y2="1"><stop offset="0" stopColor="#4cc8f8" /><stop offset="1" stopColor="#0072d0" /></linearGradient></defs><path d="M1 1h13.500v13.500H1zM15.500 1H29v13.500H15.500zM1 15.500h13.500V29H1zM15.500 15.500H29V29H15.500z" fill="url(#win)" /></>],
  ["Search", <g fill="none" stroke="#222"><circle cx="17.500" cy="12.500" r="10" strokeWidth="2.200" /><path d="M10.500 20L3.500 27.500" strokeWidth="3.200" strokeLinecap="round" /></g>],
  ["Task view", <><defs><linearGradient id="tv" x1="0" y1="0" x2="0" y2="1"><stop offset="0" stopColor="#555" /><stop offset="1" stopColor="#111" /></linearGradient></defs><rect x="1" y="8" width="22" height="20" rx="1" fill="url(#tv)" /><rect x="9" y="1" width="21" height="19" rx="1" fill="#f4f4f4" fillOpacity=".85" /><rect x="9" y="8" width="14" height="12" fill="#b9b9b9" /></>],
  ["Chat", <><defs><linearGradient id="ch" x1="0" y1="0" x2="1" y2="1"><stop offset="0" stopColor="#8a6bb8" /><stop offset="1" stopColor="#4e55d6" /></linearGradient></defs><path d="M15.500 1A14 14 0 1 1 9 27.800L1.500 29l1.700-6.500A14 14 0 0 1 15.500 1z" fill="url(#ch)" /><rect x="7.500" y="9" width="10.500" height="11.500" rx="2" fill="#fff" /><path d="M19 13l4.500-3v9.500L19 17z" fill="#fff" /></>],
  ["Edge", <><defs><linearGradient id="ed" x1="0" y1="0" x2="1" y2=".3"><stop offset="0" stopColor="#1b8fdc" /><stop offset=".5" stopColor="#2cc0d8" /><stop offset="1" stopColor="#66e04f" /></linearGradient></defs><circle cx="15" cy="15" r="14.500" fill="#0f6fc4" /><path d="M1 12C2 5 8 .5 15 .5c9 0 14.500 6 14.500 12 0 5-4 7-7.500 7-4 0-5-1.500-4-3 1.500-3-.5-7-5-7-5 0-9 2-12 2.500z" fill="url(#ed)" /><path d="M10 12c-5 7 0 17 8 17.300 5-.3 8-3 10-6.300-6 2-14 1-13.500-6C14.500 14 12 12 10 12z" fill="#0c4f9e" /></>],
  ["Store", <><path d="M9 7V3.500A1.500 1.500 0 0 1 10.500 2h9A1.500 1.500 0 0 1 21 3.500V7" fill="none" stroke="#1fb0e8" strokeWidth="2" /><path d="M1 6h28v18a5 5 0 0 1-5 5H6a5 5 0 0 1-5-5z" fill="#16549a" /><path d="M9.500 12h5v5h-5z" fill="#f25022" /><path d="M15.500 12h5v5h-5z" fill="#7fba00" /><path d="M9.500 18h5v5h-5z" fill="#00a4ef" /><path d="M15.500 18h5v5h-5z" fill="#ffb900" /></>],
  ["Security", <><path d="M0 0h30v30H0z" fill="#23828d" /><circle cx="15" cy="15" r="8.700" fill="none" stroke="#fff" strokeWidth="2.200" /><path d="M11.500 20v-6c0-2.500 1.500-4 3.500-5 2 1 3.500 2.500 3.500 5v6" fill="none" stroke="#fff" strokeWidth="2" /></>],
  ["Get Help", <><circle cx="14" cy="15.500" r="13.500" fill="#0f97d8" stroke="#fff" strokeWidth="1" /><path d="M9.500 11.500c0-6 9.500-6 9.500-.5 0 4-4.500 4-4.500 8" fill="none" stroke="#fff" strokeWidth="3.200" /><circle cx="14.500" cy="23.500" r="2" fill="#fff" /><circle cx="24.500" cy="4" r="9.500" fill="#ffc20e" /></>],
  ["File Explorer", <><path d="M0 4a2 2 0 0 1 2-2h8l3 3h14a2 2 0 0 1 2 2v6H0z" fill="#d99a00" /><path d="M0 7h30v20a1.500 1.500 0 0 1-1.500 1.500h-27A1.500 1.500 0 0 1 0 27z" fill="#fbca3e" /><path d="M5 28.500V24a3 3 0 0 1 3-3h14a3 3 0 0 1 3 3v4.500z" fill="#1877c9" /><path d="M9 25h12" stroke="#0b4f93" strokeWidth="1.500" /></>, "dot"],
  ["McAfee", <path d="M1.500 0L15 6 28.500 0v23L15 30 1.500 23zM8 9v10.500l7 3.700 7-3.700V9l-7 3.500z" fill="#c4262e" fillRule="evenodd" />],
  ["XAMPP", <><rect x="0" y="0" width="30" height="30" rx="3" fill="#f0782a" stroke="#b5551a" /><path d="M10.500 8c3.500 0 2 3.500 4.500 3.500S16 8 19.500 8s4.500 5-.5 7c5 2 4 7-.5 7s-1-3.500-3.500-3.500S14 22 10.500 22s-4.500-5 .5-7c-5-2-4-7-.5-7z" fill="none" stroke="#fff" strokeWidth="3" /></>],
  ["Chrome", <><circle cx="14" cy="16" r="13.500" fill="#fbc116" /><path d="M14 16L2.500 9A13.500 13.500 0 0 1 25.700 9.200z" fill="#e33b2e" /><path d="M14 16L2.400 9A13.500 13.500 0 0 0 12.500 29.400L19 18z" fill="#1fa34a" /><path d="M2.500 9h22.500l-11 3z" fill="#e33b2e" /><circle cx="14" cy="16" r="6.500" fill="#fff" /><circle cx="14" cy="16" r="5" fill="#2f7de8" /><circle cx="25" cy="4" r="9.500" fill="#7d7f92" /><circle cx="22" cy="2" r="5" fill="#e8e0d8" /><path d="M20 9l5-8 6 4-2 6z" fill="#2a3150" /><circle cx="29" cy="0" r="2.500" fill="#c99b74" /></>, "dot"],
  ["Git", <><path d="M15 0l7 7-7 7.500L8 7z" fill="#ff8a80" /><path d="M7.500 8l7 7-7 7.500-7-7.500z" fill="#82b1f5" /><path d="M22.500 8l7 7-7 7.500-7-7.500z" fill="#9bd67a" /><path d="M15 15.500l7 7L15 30l-7-7.500z" fill="#ffe082" /><path d="M11 4l8 6v10M19 10l4 5" fill="none" stroke="#fff" strokeWidth="1.600" /><circle cx="19" cy="10" r="2" fill="#fff" /><circle cx="19" cy="20" r="2" fill="#fff" /></>, "dot"],
  ["Tableau", <><rect x="1" y="0" width="28" height="29" rx="1" fill="#f7fbfc" stroke="#dde" strokeWidth=".6" /><svg x="3" y="2.500" width="24" height="24" viewBox="0 0 20 20">{[[10, 10, 3], [5, 5.500, 2], [15, 5.500, 2], [5, 14.500, 2], [15, 14.500, 2], [10, 2, 1.600], [10, 18, 1.600], [2, 10, 1.600], [18, 10, 1.600]].map(([x, y, r]) => <Cross key={`${x}-${y}`} x={x} y={y} r={r} c="#2b7ab0" w={1.200} />)}</svg></>, "active"],
];

function Taskbar() {
  return (
    <div className="grid h-[60px] grid-cols-[1fr_auto_1fr] items-center border-t border-[#e4d3d6] bg-[linear-gradient(90deg,#f8ece6_0%,#f5e1de_10%,#fbe7e2_20%,#fae6e4_26%,#ecd9f0_31%,#f4dce6_37%,#f6e2e2_42%,#faead8_50%,#f4dfe8_56%,#ecdaf2_62%,#f0d8e4_68%,#efd9de_76%,#e8dde2_79%,#f0d9f0_84%,#f6dcf8_90%,#f8e4fa_100%)] text-[14px] text-[#1b1b1b]">
      <button className="flex items-center gap-[9px] pl-7 text-left">
        <svg width="28" height="26" viewBox="0 0 28 26" aria-hidden="true">
          <circle cx="10" cy="9" r="8.500" fill="#fcb52b" />
          <path d="M8 23a5.500 5.500 0 0 1 0-11 7.500 7.500 0 0 1 14-1.500A6.500 6.500 0 0 1 21 23z" fill="#d4e8f6" stroke="#b9d7ec" strokeWidth=".6" />
        </svg>
        <span className="leading-5 font-normal">37°C<br /><span className="text-[#5f5558]">Partly sunny</span></span>
      </button>
      <div className="flex">
        {apps.map(([name, art, state]) => (
          <button key={name} aria-label={name} className="flex w-[55px] justify-center">
            <span className={`relative flex h-12 w-12 items-center justify-center rounded ${state === "active" ? "bg-white/50" : ""}`}>
              <svg width="30" height="30" viewBox="0 0 30 30" overflow="visible">{art}</svg>
              {state === "dot" && <span className="absolute bottom-0 h-1 w-2 rounded-full bg-[#8b7d86]" />}
              {state === "active" && <span className="absolute bottom-0 h-1 w-5 rounded-full bg-[#23828d]" />}
            </span>
          </button>
        ))}
      </div>
      <div className="flex items-center justify-end pr-[25px] font-normal">
        <button aria-label="Hidden icons" className="mr-3"><svg width="16" height="10" viewBox="0 0 16 10" fill="none" stroke="#222" strokeWidth="1.400"><path d="M1 9l7-7 7 7" /></svg></button>
        <svg width="20" height="16" viewBox="0 0 20 16" className="mr-[18px]" aria-label="OneDrive"><path d="M5 14.500a4 4 0 0 1-.5-8A6 6 0 0 1 15.500 6a4.300 4.300 0 0 1 0 8.500z" fill="#e8e8e8" stroke="#222" strokeWidth="1.300" /><path d="M2 8.500C5 5 9 7.500 13 11l5-3A4 4 0 0 0 15 6C13 1 6 1.500 5 6z" fill="#888" /></svg>
        <button className="mr-[22px] text-center leading-5">ENG<br />IN</button>
        <svg width="20" height="16" viewBox="0 0 20 16" fill="none" stroke="#222" strokeWidth="1.400" className="mr-[10px]" aria-label="Wi-Fi"><path d="M1 6a12.700 12.700 0 0 1 18 0M3.700 8.700a9 9 0 0 1 12.600 0M6.300 11.300a5.200 5.200 0 0 1 7.400 0" /><circle cx="10" cy="14" r="1.200" fill="#222" strokeWidth=".6" /></svg>
        <svg width="20" height="16" viewBox="0 0 20 16" fill="none" stroke="#222" strokeWidth="1.300" className="mr-[10px]" aria-label="Volume"><path d="M1 5.500h3L8.500 1.500v13L4 10.500H1zM11 5.500c1.200 1.500 1.200 3.500 0 5M13.500 3.500c2.300 2.500 2.300 6.500 0 9M16 1.500c3.500 3.500 3.500 9.500 0 13" /></svg>
        <svg width="20" height="14" viewBox="0 0 20 14" fill="none" stroke="#222" strokeWidth="1.400" className="mr-[17px]" aria-label="Battery"><rect x="1" y="1.500" width="15.500" height="11" rx="2.500" /><path d="M3.500 4h4v6h-4z" fill="#222" stroke="none" /><path d="M18.500 5v4" strokeWidth="2.500" /></svg>
        <button className="mr-[9px] text-right text-[15px] leading-5">13:45<br />18-05-2022</button>
        <span className="flex size-5 items-center justify-center rounded-full bg-[#23828d] text-[12px] text-white">4</span>
      </div>
    </div>
  );
}

/* ---------- page ---------- */

export default function App() {
  return (
    <div className="flex min-h-screen flex-col bg-white font-['Open_Sans',sans-serif] font-light">
      <header className="bg-white font-normal text-black">
        <div className="flex h-[29px] items-center pl-[3px] text-[14px]">
          <span className="mr-[6px] flex size-[18px] items-center justify-center bg-[#eef3f6] shadow-sm"><TableauMark size={16} mono="#4a90b8" /></span>
          Tableau - Simple superstore Project
          <div className="ml-auto flex pr-[3px]">
            <button aria-label="Minimize" className="flex w-[58px] justify-center"><svg width="14" height="14" viewBox="0 0 14 14" stroke="#000" strokeWidth="1.200"><path d="M1 6.500h12" /></svg></button>
            <button aria-label="Restore" className="flex w-[58px] justify-center"><svg width="14" height="14" viewBox="0 0 14 14" stroke="#000" fill="none" strokeWidth="1.200"><path d="M1 4h9v9H1zM4 4V1.500h8.500V10H10" /></svg></button>
            <button aria-label="Close" className="flex w-[58px] justify-center"><svg width="14" height="14" viewBox="0 0 14 14" stroke="#000" strokeWidth="1.200"><path d="M1 1l12 12M13 1L1 13" /></svg></button>
          </div>
        </div>
        <nav className="flex h-[25px] items-center gap-4 pl-[9px] text-[14px]">
          {menus.map((m) => <button key={m} className="pt-[2px] leading-[23px]">{m}</button>)}
        </nav>
      </header>
      <div className="flex flex-1 bg-[#f5f5f5]">
        <div className="flex min-w-0 flex-1 flex-col">
          <Toolbar />
          <main className="flex min-h-0 flex-1">
            <LeftPanel />
            <Dashboard />
          </main>
        </div>
        <ShowMe />
      </div>
      <SheetTabs />
      <StatusBar />
      <Taskbar />
    </div>
  );
}
